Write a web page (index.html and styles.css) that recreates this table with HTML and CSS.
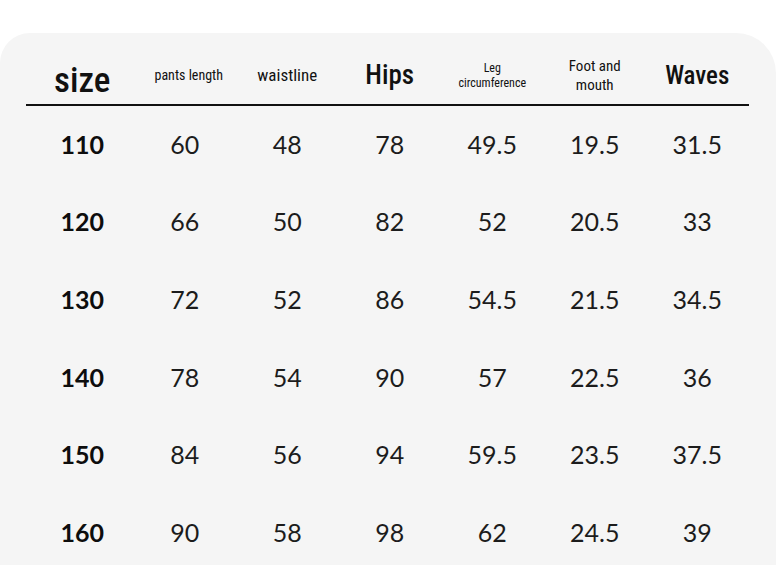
FILE: index.html
```html
<!DOCTYPE html>
<html>
<head>
<meta charset="utf-8">
<link rel="stylesheet" href="styles.css">
</head>
<body>
<div class="page">
  <div class="panel">
    <div class="table">
      <div class="row head">
        <div class="cell h-size">size</div>
        <div class="cell h-sm">pants length</div>
        <div class="cell h-md">waistline</div>
        <div class="cell h-lg">Hips</div>
        <div class="cell h-xs">Leg<br>circumference</div>
        <div class="cell h-two">Foot and<br>mouth</div>
        <div class="cell h-waves">Waves</div>
      </div>
      <div class="row data"><div class="cell b">110</div><div class="cell">60</div><div class="cell">48</div><div class="cell">78</div><div class="cell">49.5</div><div class="cell">19.5</div><div class="cell">31.5</div></div>
      <div class="row data"><div class="cell b">120</div><div class="cell">66</div><div class="cell">50</div><div class="cell">82</div><div class="cell">52</div><div class="cell">20.5</div><div class="cell">33</div></div>
      <div class="row data"><div class="cell b">130</div><div class="cell">72</div><div class="cell">52</div><div class="cell">86</div><div class="cell">54.5</div><div class="cell">21.5</div><div class="cell">34.5</div></div>
      <div class="row data"><div class="cell b">140</div><div class="cell">78</div><div class="cell">54</div><div class="cell">90</div><div class="cell">57</div><div class="cell">22.5</div><div class="cell">36</div></div>
      <div class="row data"><div class="cell b">150</div><div class="cell">84</div><div class="cell">56</div><div class="cell">94</div><div class="cell">59.5</div><div class="cell">23.5</div><div class="cell">37.5</div></div>
      <div class="row data"><div class="cell b">160</div><div class="cell">90</div><div class="cell">58</div><div class="cell">98</div><div class="cell">62</div><div class="cell">24.5</div><div class="cell">39</div></div>
    </div>
  </div>
</div>
</body>
</html>
```

FILE: styles.css
```css
html, body {
  margin: 0;
  padding: 0;
  background: #ffffff;
}
.page {
  width: 776px;
  height: 582px;
  padding-top: 33px;
  box-sizing: border-box;
  overflow: hidden;
}
.panel {
  background: #f5f5f5;
  height: 532px;
  border-radius: 30px 40px 0 0;
  padding-left: 26px;
  box-sizing: border-box;
}
.table {
  width: 723px;
}
.row {
  display: grid;
  grid-template-columns: repeat(7, 102.5px);
  padding-left: 5px;
  align-items: center;
}
.head {
  height: 73px;
  padding-top: 15px;
  box-sizing: border-box;
  border-bottom: 2px solid #111;
  font-family: "Roboto Condensed", "Liberation Sans Narrow", Roboto, sans-serif;
  color: #111;
  line-height: 1.25;
}
.data {
  height: 77.6px;
  padding-bottom: 2px;
  box-sizing: border-box;
  font-family: Lato, "Noto Sans", sans-serif;
  font-weight: 400;
  font-size: 25px;
  color: #1c1c1c;
}
.cell {
  text-align: center;
  white-space: nowrap;
}
.b {
  font-weight: 700;
  color: #0d0d0d;
}
.h-size {
  font-size: 35px;
  font-weight: 500;
  margin-top: 10px;
}
.h-sm { font-size: 14px; font-weight: 400; padding-left: 8px; }
.h-md { font-size: 17px; font-weight: 400; }
.h-lg { font-size: 27px; font-weight: 500; }
.h-xs { font-size: 12px; line-height: 15px; font-weight: 400; }
.h-two { font-size: 15px; line-height: 19px; font-weight: 400; }
.h-waves { font-size: 25px; font-weight: 500; }
```
